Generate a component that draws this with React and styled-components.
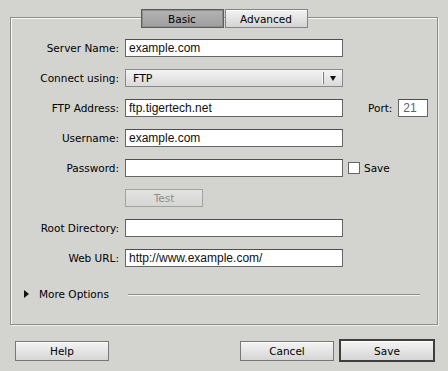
import React from 'react';
import styled, { createGlobalStyle } from 'styled-components';

const Global = createGlobalStyle`
  html, body { margin: 0; padding: 0; background: #d3d4cf; }
  #root { width: 448px; height: 371px; }
`;

const Window = styled.div`
  width: 448px;
  height: 371px;
  box-sizing: border-box;
  padding-top: 17px;
  background: #d3d4cf;
  display: flex;
  flex-direction: column;
  font-family: "DejaVu Sans", sans-serif;
  font-size: 10.5px;
  color: #000;
`;

const Panel = styled.div`
  margin: 0 10px;
  height: 308px;
  box-sizing: border-box;
  border: 1px solid #8e8f8b;
  box-shadow: inset 1px 1px 0 #f7f7f5, 1px 1px 0 #eeeeec;
  display: flex;
  flex-direction: column;
`;

const TabBar = styled.div`
  display: flex;
  justify-content: center;
  gap: 1px;
  margin-top: -9px;
`;

const Tab = styled.div`
  width: 83px;
  height: 19px;
  box-sizing: border-box;
  display: flex;
  align-items: center;
  justify-content: center;
  border: 1px solid ${p => (p.$active ? '#5c5c5c' : '#858585')};
  background: ${p =>
    p.$active
      ? 'linear-gradient(#b3b3b3, #9f9f9f)'
      : 'linear-gradient(#f3f3f3, #d4d4d4)'};
  box-shadow: ${p => (p.$active ? 'inset 0 0 0 1px #8d8d8d' : 'inset 0 1px 0 #fff')};
  color: #000;
`;

const Form = styled.div`
  display: flex;
  flex-direction: column;
  gap: 12px;
  margin-top: 11px;
`;

const Row = styled.div`
  display: flex;
  align-items: center;
  height: 18px;
`;

const Label = styled.div`
  width: 108px;
  margin-right: 6px;
  flex-shrink: 0;
  text-align: right;
  white-space: nowrap;
`;

const TextField = styled.input`
  width: ${p => p.$w || 218}px;
  height: 18px;
  box-sizing: border-box;
  margin: 0;
  border: 1px solid #666;
  border-top-color: #4e4e4e;
  background: #fff;
  padding: 0 ${p => (p.$pad || 3)}px;
  font-family: "Liberation Sans", Arial, sans-serif;
  font-size: 12px;
  color: ${p => p.$color || '#111'};
  outline: none;
`;

const Select = styled.div`
  width: 218px;
  height: 18px;
  box-sizing: border-box;
  display: flex;
  align-items: center;
  border: 1px solid #8a8a8a;
  background: linear-gradient(#f4f4f4, #d9d9d9);
`;

const SelectValue = styled.div`
  flex: 1;
  padding-left: 7px;
  font-size: 11px;
`;

const SelectArrow = styled.div`
  width: 18px;
  height: 12px;
  border-left: 1px solid #7c7c7c;
  box-shadow: -1px 0 0 #fafafa;
  display: flex;
  align-items: center;
  justify-content: center;
  &::after {
    content: '';
    border-left: 3.5px solid transparent;
    border-right: 3.5px solid transparent;
    border-top: 5px solid #111;
  }
`;

const SideLabel = styled.div`
  margin-left: 25px;
  margin-right: 6px;
`;

const Check = styled.div`
  width: 12px;
  height: 12px;
  box-sizing: border-box;
  margin-left: 5px;
  border: 1px solid #666;
  background: #fff;
`;

const CheckText = styled.div`
  margin-left: 4px;
`;

const TestButton = styled.div`
  width: 78px;
  height: 18px;
  box-sizing: border-box;
  display: flex;
  align-items: center;
  justify-content: center;
  border: 1px solid #a2a2a0;
  background: linear-gradient(#e2e2e0, #d6d6d4);
  color: #8e8e8e;
`;

const MoreRow = styled.div`
  display: flex;
  align-items: center;
  height: 14px;
  margin-top: 20px;
  padding-left: 13px;
`;

const Disclosure = styled.div`
  width: 0;
  height: 0;
  border-top: 4px solid transparent;
  border-bottom: 4px solid transparent;
  border-left: 5px solid #111;
  margin-right: 10px;
`;

const Rule = styled.div`
  flex: 1;
  height: 1px;
  margin: 0 17px 0 19px;
  background: #8e8f8b;
  box-shadow: 0 1px 0 #f4f4f2;
`;

const Footer = styled.div`
  display: flex;
  align-items: center;
  height: 23px;
  margin-top: 14px;
  padding: 0 13px 0 15px;
`;

const Button = styled.div`
  width: ${p => (p.$default ? 96 : 94)}px;
  height: ${p => (p.$default ? 23 : 20)}px;
  box-sizing: border-box;
  display: flex;
  align-items: center;
  justify-content: center;
  border: ${p => (p.$default ? '2px solid #3e3e3e' : '1px solid #777')};
  background: linear-gradient(#f4f4f4, #d6d6d6);
  box-shadow: inset 0 1px 0 #fff;
  color: #000;
  margin-left: ${p => p.$gap || 0}px;
`;

const Spacer = styled.div`
  flex: 1;
`;

export default function App() {
  return (
    <>
      <Global />
      <Window>
        <Panel>
          <TabBar>
            <Tab $active>Basic</Tab>
            <Tab>Advanced</Tab>
          </TabBar>
          <Form>
            <Row>
              <Label>Server Name:</Label>
              <TextField readOnly value="example.com" />
            </Row>
            <Row>
              <Label>Connect using:</Label>
              <Select>
                <SelectValue>FTP</SelectValue>
                <SelectArrow />
              </Select>
            </Row>
            <Row>
              <Label>FTP Address:</Label>
              <TextField readOnly value="ftp.tigertech.net" />
              <SideLabel>Port:</SideLabel>
              <TextField readOnly value="21" $w={30} $pad={4} $color="#58627a" />
            </Row>
            <Row>
              <Label>Username:</Label>
              <TextField readOnly value="example.com" />
            </Row>
            <Row>
              <Label>Password:</Label>
              <TextField readOnly value="" type="password" />
              <Check />
              <CheckText>Save</CheckText>
            </Row>
            <Row>
              <Label />
              <TestButton>Test</TestButton>
            </Row>
            <Row>
              <Label>Root Directory:</Label>
              <TextField readOnly value="" />
            </Row>
            <Row>
              <Label>Web URL:</Label>
              <TextField readOnly value="http://www.example.com/" />
            </Row>
          </Form>
          <MoreRow>
            <Disclosure />
            <span>More Options</span>
            <Rule />
          </MoreRow>
        </Panel>
        <Footer>
          <Button>Help</Button>
          <Spacer />
          <Button>Cancel</Button>
          <Button $default $gap={5}>Save</Button>
        </Footer>
      </Window>
    </>
  );
}
